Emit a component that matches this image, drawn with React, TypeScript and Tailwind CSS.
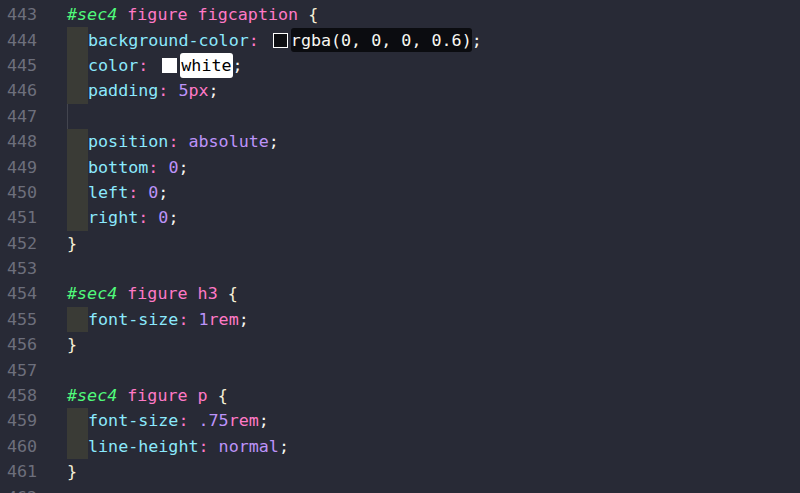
import React from "react";

type Tok =
  | { t: "sel" | "tag" | "brace" | "prop" | "colon" | "num" | "unit" | "kw" | "punct" | "sp"; v: string }
  | { t: "swatch"; fill: string }
  | { t: "darkBox" | "lightBox"; v: string };

const cls: Record<string, string> = {
  sel: "text-[#50fa7b] italic",
  tag: "text-[#ff79c6]",
  brace: "text-[#f6f0d6]",
  prop: "text-[#8be9fd]",
  colon: "text-[#ff79c6]",
  num: "text-[#bd93f9]",
  unit: "text-[#ff79c6]",
  kw: "text-[#bd93f9]",
  punct: "text-[#f8f8f2]",
  sp: "",
};

const decl = (prop: string, value: Tok[]): Tok[] => [
  { t: "prop", v: prop },
  { t: "colon", v: ":" },
  { t: "sp", v: " " },
  ...value,
  { t: "punct", v: ";" },
];

const selector = (id: string, rest: string): Tok[] => [
  { t: "sel", v: id },
  { t: "tag", v: " " + rest },
  { t: "sp", v: " " },
  { t: "brace", v: "{" },
];

const close: Tok[] = [{ t: "brace", v: "}" }];

// indent: 0 = top level, 1 = inside a block, "guide" = empty line inside a block
const lines: { n: number; indent: 0 | 1 | "guide"; toks: Tok[] }[] = [
  { n: 443, indent: 0, toks: selector("#sec4", "figure figcaption") },
  {
    n: 444,
    indent: 1,
    toks: decl("background-color", [
      { t: "swatch", fill: "#0d0e12" },
      { t: "darkBox", v: "rgba(0, 0, 0, 0.6)" },
    ]),
  },
  {
    n: 445,
    indent: 1,
    toks: decl("color", [
      { t: "swatch", fill: "#ffffff" },
      { t: "lightBox", v: "white" },
    ]),
  },
  { n: 446, indent: 1, toks: decl("padding", [{ t: "num", v: "5" }, { t: "unit", v: "px" }]) },
  { n: 447, indent: "guide", toks: [] },
  { n: 448, indent: 1, toks: decl("position", [{ t: "kw", v: "absolute" }]) },
  { n: 449, indent: 1, toks: decl("bottom", [{ t: "num", v: "0" }]) },
  { n: 450, indent: 1, toks: decl("left", [{ t: "num", v: "0" }]) },
  { n: 451, indent: 1, toks: decl("right", [{ t: "num", v: "0" }]) },
  { n: 452, indent: 0, toks: close },
  { n: 453, indent: 0, toks: [] },
  { n: 454, indent: 0, toks: selector("#sec4", "figure h3") },
  { n: 455, indent: 1, toks: decl("font-size", [{ t: "num", v: "1" }, { t: "unit", v: "rem" }]) },
  { n: 456, indent: 0, toks: close },
  { n: 457, indent: 0, toks: [] },
  { n: 458, indent: 0, toks: selector("#sec4", "figure p") },
  { n: 459, indent: 1, toks: decl("font-size", [{ t: "num", v: ".75" }, { t: "unit", v: "rem" }]) },
  { n: 460, indent: 1, toks: decl("line-height", [{ t: "kw", v: "normal" }]) },
  { n: 461, indent: 0, toks: close },
  { n: 462, indent: 0, toks: [] },
];

function Token({ tok }: { tok: Tok }) {
  if (tok.t === "swatch") {
    return (
      <span
        className="inline-block w-[15px] h-[15px] ml-[4px] mr-[3px] border border-white self-center"
        style={{ backgroundColor: tok.fill }}
      />
    );
  }
  if (tok.t === "darkBox") {
    return (
      <span className="bg-[#0b0c10] text-[#f8f8f2] rounded-[3px] h-[24px] flex items-center">
        {tok.v}
      </span>
    );
  }
  if (tok.t === "lightBox") {
    return (
      <span className="bg-white text-black rounded-[3px] h-[25px] px-[1px] flex items-center">
        {tok.v}
      </span>
    );
  }
  return <span className={cls[tok.t]}>{tok.v}</span>;
}

export default function App() {
  return (
    <div
      className="w-[800px] h-[493px] overflow-hidden bg-[#282a36] pt-[2px]"
      style={{ fontFamily: '"DejaVu Sans Mono", "Liberation Mono", monospace' }}
    >
      {lines.map((line) => (
        <div key={line.n} className="flex h-[25.4px] items-center text-[16.7px] whitespace-pre">
          <div className="w-[67px] pl-[7px] text-[#6d6f7c] h-full flex items-center">{line.n}</div>
          {line.indent === 1 && <div className="w-[21px] h-full bg-[#3a3b36]" />}
          {line.indent === "guide" && <div className="w-[1px] h-full bg-[#43454f]" />}
          <div className="flex items-center h-full">
            {line.toks.map((tok, i) => (
              <Token key={i} tok={tok} />
            ))}
          </div>
        </div>
      ))}
    </div>
  );
}
